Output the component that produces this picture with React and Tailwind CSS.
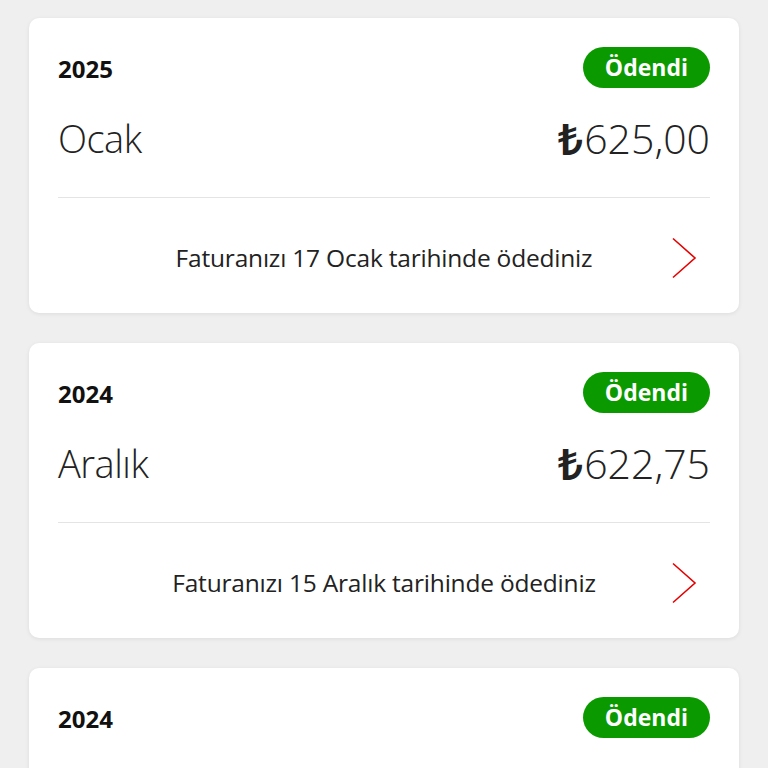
const bills = [
  { year: "2025", month: "Ocak", amount: "625,00", note: "Faturanızı 17 Ocak tarihinde ödediniz" },
  { year: "2024", month: "Aralık", amount: "622,75", note: "Faturanızı 15 Aralık tarihinde ödediniz" },
  { year: "2024", month: "Kasım", amount: "598,40", note: "Faturanızı 16 Kasım tarihinde ödediniz" },
];

function Chevron() {
  return (
    <svg width="26" height="42" viewBox="0 0 26 42" fill="none">
      <path d="M2 1.5 L24 21 L2 40.5" stroke="#e60000" strokeWidth="1.6" />
    </svg>
  );
}

function BillCard({ bill }) {
  return (
    <div className="bg-white rounded-[10px] shadow-[0_1px_4px_rgba(0,0,0,0.08)] px-[29px] pt-[29px]">
      <div className="flex items-center justify-between">
        <span className="text-[24px] font-bold text-[#111] mt-[3px]">{bill.year}</span>
        <span className="h-[41px] px-[22px] rounded-full bg-[#0a9a00] text-white text-[23px] font-bold flex items-center">
          Ödendi
        </span>
      </div>
      <div className="flex items-center justify-between mt-[26px] h-[48px]">
        <span className="text-[38px] font-light text-[#222] leading-none tracking-[-0.5px]">{bill.month}</span>
        <span className="text-[41px] font-light text-[#222] leading-none flex items-center">
          <span className="font-semibold text-[44px] mr-[1px]">₺</span>
          {bill.amount}
        </span>
      </div>
      <div className="mt-[35px] h-px bg-[#e4e4e4]" />
      <div className="grid grid-cols-[40px_1fr_40px] items-center h-[115px] pt-[5px]">
        <span />
        <span className="text-center text-[24.5px] tracking-[-0.2px] text-[#222]">{bill.note}</span>
        <span className="flex justify-end pr-[13px]">
          <Chevron />
        </span>
      </div>
    </div>
  );
}

export default function App() {
  return (
    <div
      className="min-h-screen bg-[#efefef] px-[29px] pt-[18px] pb-[30px] flex flex-col gap-[30px]"
      style={{ fontFamily: '"Open Sans", "Noto Sans", sans-serif' }}
    >
      {bills.map((bill, i) => (
        <BillCard key={i} bill={bill} />
      ))}
    </div>
  );
}
